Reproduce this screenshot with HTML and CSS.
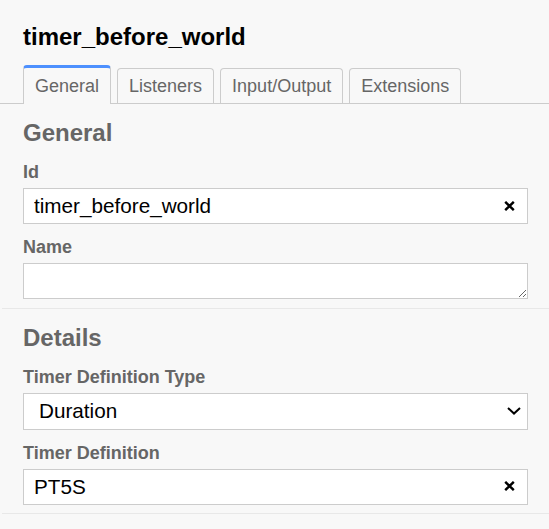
FILE: index.html
```html
<!DOCTYPE html>
<html lang="en">
<head>
<meta charset="utf-8">
<title>Properties</title>
<link rel="stylesheet" href="styles.css">
</head>
<body>
<div class="panel">
  <h1 class="title">timer_before_world</h1>
  <div class="tabs">
    <div class="tab active">General</div>
    <div class="tab">Listeners</div>
    <div class="tab">Input/Output</div>
    <div class="tab">Extensions</div>
  </div>

  <section class="group">
    <h2 class="group-title">General</h2>
    <div class="entry">
      <label class="label" for="id">Id</label>
      <div class="field">
        <input class="input" id="id" value="timer_before_world">
        <span class="clear"><svg width="11" height="10" viewBox="0 0 11 10"><path d="M1.2 0.8 L9.8 9.2 M9.8 0.8 L1.2 9.2" stroke="#000" stroke-width="2.4" fill="none"/></svg></span>
      </div>
    </div>
    <div class="entry">
      <label class="label" for="name">Name</label>
      <textarea class="textarea" id="name"></textarea>
    </div>
  </section>

  <section class="group">
    <h2 class="group-title">Details</h2>
    <div class="entry">
      <label class="label">Timer Definition Type</label>
      <div class="select">
        <span class="select-value">Duration</span>
        <svg width="14" height="8" viewBox="0 0 14 8"><path d="M1 1 L7 6.6 L13 1" stroke="#000" stroke-width="2" fill="none"/></svg>
      </div>
    </div>
    <div class="entry">
      <label class="label" for="def">Timer Definition</label>
      <div class="field">
        <input class="input" id="def" value="PT5S">
        <span class="clear"><svg width="11" height="10" viewBox="0 0 11 10"><path d="M1.2 0.8 L9.8 9.2 M9.8 0.8 L1.2 9.2" stroke="#000" stroke-width="2.4" fill="none"/></svg></span>
      </div>
    </div>
  </section>
</div>
</body>
</html>
```

FILE: styles.css
```css
html, body {
  margin: 0;
  background: #f8f8f8;
  font-family: "Liberation Sans", Arial, sans-serif;
}

.panel {
  background: #f8f8f8;
}

.title {
  margin: 0;
  padding: 23px 23px 0;
  font-size: 24px;
  line-height: 28px;
  font-weight: bold;
  color: #000;
}

.tabs {
  display: flex;
  align-items: flex-end;
  gap: 6px;
  margin-top: 14px;
  padding-left: 23px;
  border-bottom: 1px solid #ccc;
}

.tab {
  height: 34px;
  line-height: 35px;
  padding: 0 11px;
  border: 1px solid #ccc;
  border-bottom: none;
  border-radius: 4px 4px 0 0;
  font-size: 18px;
  color: #666;
  white-space: nowrap;
}

.tab.active {
  height: 35px;
  line-height: 36px;
  padding-bottom: 1px;
  margin-bottom: -1px;
  border-top: 3px solid #4d90fe;
  background: #f8f8f8;
}

.group {
  margin-left: 2px;
  padding: 15px 21px 8.5px 21px;
  border-bottom: 1px solid #e8e8e8;
}

.group-title {
  margin: 0 0 15px;
  font-size: 24px;
  line-height: 28px;
  font-weight: bold;
  color: #666;
}

.entry + .entry {
  margin-top: 13px;
}

.label {
  display: block;
  margin-bottom: 6px;
  font-size: 18px;
  line-height: 20px;
  font-weight: bold;
  color: #666;
}

.field {
  display: flex;
  align-items: center;
  height: 36px;
  box-sizing: border-box;
  border: 1px solid #ccc;
  background: #fff;
}

.input {
  flex: 1;
  min-width: 0;
  height: 34px;
  margin: 0;
  padding: 0 0 0 10px;
  border: 0;
  outline: none;
  background: transparent;
  font-family: "Liberation Sans", Arial, sans-serif;
  font-size: 20.7px;
  color: #000;
}

.clear {
  display: flex;
  align-items: center;
  padding: 0 12px 1px 8px;
}

.textarea {
  display: block;
  width: 100%;
  height: 36px;
  box-sizing: border-box;
  margin: 0;
  padding: 4px 10px;
  border: 1px solid #ccc;
  background: #fff;
  outline: none;
  resize: vertical;
  font-family: "Liberation Sans", Arial, sans-serif;
  font-size: 20.7px;
}

.select {
  display: flex;
  align-items: center;
  justify-content: space-between;
  height: 37px;
  box-sizing: border-box;
  padding: 0 6px 0 15px;
  border: 1px solid #ccc;
  background: #fff;
}

.select-value {
  font-size: 20.7px;
  color: #000;
}
```
